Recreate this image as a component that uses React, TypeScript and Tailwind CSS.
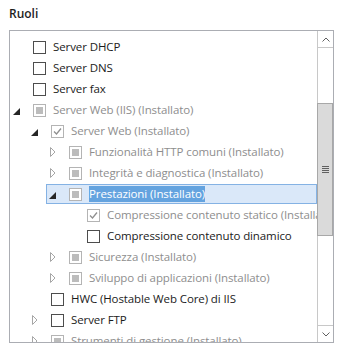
import React from "react";

type Check = "empty" | "checked" | "indet";
type Exp = "open" | "closed" | null;

interface RowData {
  level: 0 | 1 | 2 | 3;
  exp: Exp;
  check: Check;
  label: string;
  disabled?: boolean;
  selected?: boolean;
}

const rows: RowData[] = [
  { level: 0, exp: null, check: "empty", label: "Server DHCP" },
  { level: 0, exp: null, check: "empty", label: "Server DNS" },
  { level: 0, exp: null, check: "empty", label: "Server fax" },
  { level: 0, exp: "open", check: "indet", label: "Server Web (IIS) (Installato)", disabled: true },
  { level: 1, exp: "open", check: "checked", label: "Server Web (Installato)", disabled: true },
  { level: 2, exp: "closed", check: "indet", label: "Funzionalità HTTP comuni (Installato)", disabled: true },
  { level: 2, exp: "closed", check: "indet", label: "Integrità e diagnostica (Installato)", disabled: true },
  { level: 2, exp: "open", check: "indet", label: "Prestazioni (Installato)", disabled: true, selected: true },
  { level: 3, exp: null, check: "checked", label: "Compressione contenuto statico (Installato)", disabled: true },
  { level: 3, exp: null, check: "empty", label: "Compressione contenuto dinamico" },
  { level: 2, exp: "closed", check: "indet", label: "Sicurezza (Installato)", disabled: true },
  { level: 2, exp: "closed", check: "indet", label: "Sviluppo di applicazioni (Installato)", disabled: true },
  { level: 1, exp: null, check: "empty", label: "HWC (Hostable Web Core) di IIS" },
  { level: 1, exp: "closed", check: "empty", label: "Server FTP" },
  { level: 1, exp: "closed", check: "indet", label: "Strumenti di gestione (Installato)", disabled: true },
];

const indent = ["ml-0", "ml-[18px]", "ml-[36px]", "ml-[54px]"];

function Expander({ exp }: { exp: Exp }) {
  return (
    <div className="w-[22px] h-full flex items-center shrink-0">
      {exp === "open" && (
        <svg width="7" height="7" viewBox="0 0 7 7" className="ml-[2px] mt-[3px]">
          <polygon points="7,0 7,7 0,7" fill="#262626" />
        </svg>
      )}
      {exp === "closed" && (
        <svg width="6" height="10" viewBox="0 0 6 10" className="ml-[3px]">
          <path d="M0.5 0.5 L5 5 L0.5 9.5 Z" fill="none" stroke="#a6a6a6" strokeWidth="1" />
        </svg>
      )}
    </div>
  );
}

function Box({ check, disabled }: { check: Check; disabled?: boolean }) {
  return (
    <div
      className={
        "w-[13px] h-[13px] shrink-0 border bg-white flex items-center justify-center " +
        (disabled ? "border-[#b4b4b4]" : "border-[#4d4d4d]")
      }
    >
      {check === "indet" && <div className="w-[7px] h-[7px] bg-[#bcbcbc]" />}
      {check === "checked" && (
        <svg width="11" height="11" viewBox="0 0 11 11">
          <path d="M2 5.5 L4.5 8 L9 2.5" fill="none" stroke="#8f8f8f" strokeWidth="1.3" />
        </svg>
      )}
    </div>
  );
}

function Row({ r }: { r: RowData }) {
  return (
    <div className="h-[21px] flex items-start">
      <div
        className={
          "h-[20px] flex-1 min-w-0 flex items-center border " +
          indent[r.level] +
          (r.selected ? " border-[#84b2e4] bg-[#dae8f9]" : " border-transparent")
        }
      >
        <Expander exp={r.exp} />
        <Box check={r.check} disabled={r.disabled} />
        <span
          className={
            "ml-[7px] whitespace-nowrap leading-[16px] " +
            (r.selected
              ? "bg-[#64a3df] text-white"
              : r.disabled
              ? "text-[#8e8e8e]"
              : "text-[#1b1b1b]")
          }
        >
          {r.label}
        </span>
      </div>
    </div>
  );
}

export default function App() {
  return (
    <div
      className="w-[347px] h-[358px] bg-white overflow-hidden text-[11.5px] tracking-[-0.1px]"
      style={{ fontFamily: '"Segoe UI", "Open Sans", "Noto Sans", sans-serif' }}
    >
      <div className="pl-[9px] pt-[5px] h-[30px] font-semibold text-[12px] tracking-normal text-[#1e1e1e] leading-[18px]">Ruoli</div>
      <div className="ml-[9px] w-[325px] h-[313px] border border-[#abadb3] flex overflow-hidden">
        <div className="flex-1 min-w-0 pt-[6px] overflow-hidden">
          {rows.map((r, i) => (
            <Row key={i} r={r} />
          ))}
        </div>
        <div className="w-[16px] shrink-0 border-l border-[#c8c8c8] flex flex-col">
          <div className="h-[17px] border-b border-[#c8c8c8] flex items-center justify-center">
            <svg width="8" height="5" viewBox="0 0 8 5">
              <path d="M0.5 4.5 L4 1 L7.5 4.5" fill="none" stroke="#606060" strokeWidth="1" />
            </svg>
          </div>
          <div className="flex-1 relative">
            <div className="absolute left-[-1px] right-0 top-[55px] h-[133px] border border-[#a8a8a8] bg-[#dadada] flex flex-col items-center justify-center gap-[1px]">
              <div className="w-[7px] h-[1px] bg-[#606060]" />
              <div className="w-[7px] h-[1px] bg-[#606060]" />
              <div className="w-[7px] h-[1px] bg-[#606060]" />
              <div className="w-[7px] h-[1px] bg-[#606060]" />
            </div>
          </div>
          <div className="h-[17px] border-t border-[#c8c8c8] flex items-center justify-center">
            <svg width="8" height="5" viewBox="0 0 8 5">
              <path d="M0.5 0.5 L4 4 L7.5 0.5" fill="none" stroke="#606060" strokeWidth="1" />
            </svg>
          </div>
        </div>
      </div>
    </div>
  );
}
